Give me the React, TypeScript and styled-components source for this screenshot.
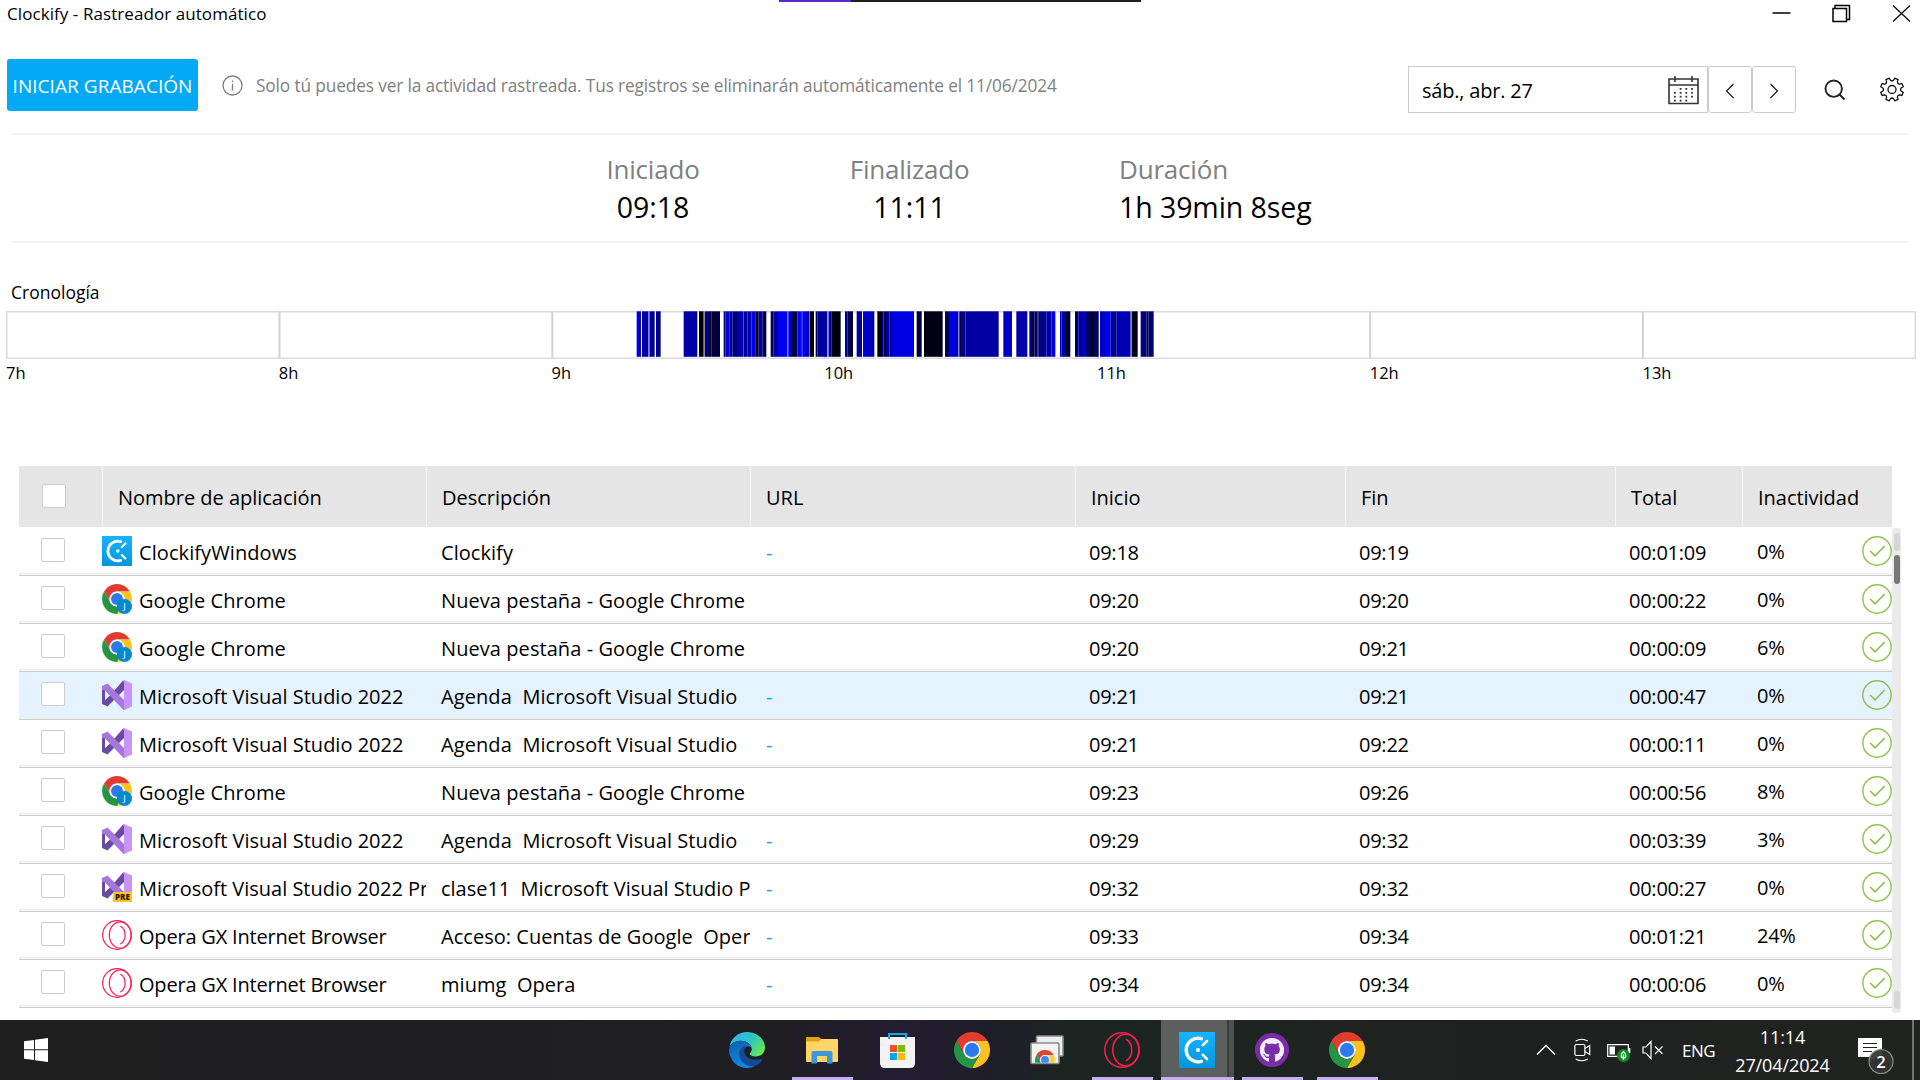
import React from "react";
import styled, { createGlobalStyle } from "styled-components";
import { FaGithub } from "react-icons/fa";

const GlobalStyle = createGlobalStyle`
  *, *::before, *::after { box-sizing: border-box; }
  html, body { margin: 0; padding: 0; background: #fff; overflow: hidden; }
  body { font-family: "Open Sans", "Noto Sans", sans-serif; color: #000; }
  svg { display: block; flex: none; }
`;

const Screen = styled.div`
  width: 1920px;
  height: 1080px;
  display: flex;
  flex-direction: column;
  overflow: hidden;
  position: relative;
`;

/* ---------- window frame ---------- */

const RecorderStrip = styled.div`
  position: absolute;
  top: 0;
  left: 779px;
  width: 362px;
  height: 2px;
  background: linear-gradient(to right, #5a2ac8 72px, #1f1f1f 72px);
`;

const AppWindow = styled.main`
  height: 1020px;
  display: flex;
  flex-direction: column;
`;

const TitleBar = styled.header`
  height: 28px;
  display: flex;
  justify-content: space-between;
  padding: 0 9px 0 7px;
`;

const Title = styled.span`
  font-size: 17px;
  line-height: 28px;
  letter-spacing: 0.07px;
`;

const WindowButtons = styled.div`
  display: flex;
  gap: 41px;
  padding-top: 4px;
`;

/* ---------- toolbar ---------- */

const Toolbar = styled.section`
  height: 105px;
  display: flex;
  align-items: flex-start;
  padding: 31px 15px 0 7px;
`;

const RecordButton = styled.button`
  width: 191px;
  height: 52px;
  padding: 0;
  border: 0;
  border-radius: 3px;
  background: #03a9f4;
  color: #fff;
  font: 19px/54px "Open Sans", sans-serif;
  letter-spacing: 0.05px;
  white-space: nowrap;
`;

const Notice = styled.div`
  display: flex;
  align-items: center;
  gap: 13px;
  height: 52px;
  margin-left: 24px;
  color: #808080;
  font-size: 17.3px;
  letter-spacing: -0.14px;
  white-space: nowrap;
`;

const DateControls = styled.div`
  display: flex;
  align-items: center;
  margin: 7px 0 0 auto;
  height: 47px;
`;

const DateField = styled.div`
  width: 300px;
  height: 47px;
  border: 1px solid #ccc;
  display: flex;
  align-items: center;
  justify-content: space-between;
  padding: 2px 8px 0 13px;
  font-size: 20px;
  letter-spacing: -0.2px;
`;

const StepButton = styled.button`
  width: 44px;
  height: 47px;
  padding: 3px 0 0;
  border: 1px solid #ccc;
  border-radius: 3px;
  background: #fff;
  display: flex;
  align-items: center;
  justify-content: center;
`;

const ToolIcon = styled.span<{ $gap: number }>`
  margin-left: ${(p) => p.$gap}px;
`;

const Divider = styled.hr`
  flex: none;
  height: 2px;
  border: 0;
  margin: 0 10px;
  background: #f3f3f3;
`;

/* ---------- summary ---------- */

const Summary = styled.section`
  height: 106px;
  display: flex;
  padding: 15px 0 0 603px;
`;

const Stat = styled.div<{ $width: number; $after: number; $left?: boolean }>`
  width: ${(p) => p.$width}px;
  margin-right: ${(p) => p.$after}px;
  text-align: ${(p) => (p.$left ? "left" : "center")};
  white-space: nowrap;
`;

const StatLabel = styled.div`
  font-size: 26px;
  line-height: 38px;
  letter-spacing: -0.2px;
  color: #808080;
`;

const StatValue = styled.div`
  font-size: 28.5px;
  line-height: 38px;
  letter-spacing: -0.08px;
`;

/* ---------- timeline ---------- */

const Timeline = styled.section`
  height: 223px;
  padding: 34px 4px 0 6px;
`;

const TimelineTitle = styled.div`
  padding-left: 5px;
  font-size: 17.5px;
  line-height: 30px;
  height: 34px;
  letter-spacing: 0;
`;

const HourLabels = styled.div`
  display: grid;
  grid-template-columns: repeat(7, 272.75px);
  font-size: 16.5px;
  line-height: 28px;
`;

/* ---------- table ---------- */

const columns = "83px 324px 324px 325px 270px 270px 127px 1fr";

const Table = styled.section`
  padding-left: 19px;
`;

const HeaderRow = styled.div`
  width: 1873px;
  height: 61px;
  display: grid;
  grid-template-columns: ${columns};
  background: #e5e5e5;
  margin-bottom: 1px;
`;

const HeaderCell = styled.div`
  border-left: 1px solid #f4f4f4;
  padding: 1px 0 0 15px;
  font-size: 20px;
  line-height: 61px;
  letter-spacing: -0.02px;
  &:first-child { border-left: 0; padding: 18px 0 0 23px; }
`;

const TableBody = styled.div`
  display: flex;
`;

const Rows = styled.div`
  width: 1873px;
`;

const Row = styled.div<{ $selected?: boolean }>`
  height: 48px;
  display: grid;
  grid-template-columns: ${columns};
  background: ${(p) => (p.$selected ? "#e5f2ff" : "#fff")};
  border-bottom: 1px solid #ccc;
  box-shadow: inset 0 -2px 0 #f1f1f1;
`;

const Cell = styled.div`
  display: flex;
  min-width: 0;
  height: 47px;
  overflow: hidden;
  white-space: pre;
  padding-left: 14px;
  font-size: 20px;
  line-height: 50px;
  letter-spacing: -0.25px;
`;

const CheckCell = styled(Cell)`
  padding: 10px 0 0 22px;
`;

const AppCell = styled(Cell)<{ $spacing: number }>`
  padding-left: 0;
  gap: 7px;
  letter-spacing: ${(p) => p.$spacing}px;
`;

const DescriptionCell = styled(Cell)<{ $spacing: number }>`
  padding-left: 15px;
  letter-spacing: ${(p) => p.$spacing}px;
`;

const LinkCell = styled(Cell)`
  padding-left: 16px;
  color: #03a9f4;
`;

const IconSlot = styled.span`
  padding-top: 8px;
`;

const IdleCell = styled(Cell)`
  justify-content: space-between;
  padding-left: 15px;
  line-height: 48px;
`;

const Checkbox = styled.span`
  width: 24px;
  height: 24px;
  background: #fff;
  border: 1px solid #ccc;
  border-radius: 2px;
  display: block;
`;

const ScrollTrack = styled.div`
  width: 9px;
  height: 485px;
  border-radius: 3px;
  background: #ecebec;
  display: flex;
  flex-direction: column;
  align-items: center;
  padding: 5px 0 4px 1px;
`;

const ScrollPart = styled.span<{ $h: number; $color: string; $top?: string }>`
  width: 6px;
  height: ${(p) => p.$h}px;
  margin-top: ${(p) => p.$top ?? "0"};
  border-radius: 3px;
  background: ${(p) => p.$color};
`;

/* ---------- taskbar ---------- */

const Taskbar = styled.footer`
  height: 60px;
  display: flex;
  background: linear-gradient(to right, #1f1f1f 0, #1f1f22 330px, #1f1f24 640px, #1f1e22 780px, #231d31 900px, #1f1e28 990px, #1c2522 1070px, #1e2421 1300px, #1e2120 1500px, #20231f 1920px);
  color: #fff;
`;

const StartButton = styled.div`
  width: 717px;
  padding: 18px 0 0 24px;
`;

const TaskButton = styled.div<{ $running?: boolean; $active?: boolean }>`
  width: ${(p) => (p.$active ? 73 : 61)}px;
  margin: 0 ${(p) => (p.$active ? 8 : 14)}px 0 ${(p) => (p.$active ? -6 : 0)}px;
  height: 60px;
  display: flex;
  align-items: center;
  justify-content: ${(p) => (p.$active ? "flex-start" : "center")};
  padding: 3px 1px 0 ${(p) => (p.$active ? 18 : 0)}px;
  background: ${(p) =>
    p.$active
      ? "linear-gradient(to right, #5b605e 66px, #383c3b 66px, #383c3b 68px, #4c514f 68px)"
      : "transparent"};
  border-bottom: 3px solid ${(p) => (p.$running ? "#c6adf7" : "transparent")};
`;

const Tray = styled.div`
  margin-left: auto;
  width: 385px;
  display: flex;
`;

const TraySlot = styled.span<{ $w: number; $top: number }>`
  width: ${(p) => p.$w}px;
  padding-top: ${(p) => p.$top}px;
`;

const Language = styled.span`
  width: 48px;
  padding: 1px 0 0 1px;
  font-size: 17px;
  line-height: 60px;
  letter-spacing: -0.5px;
`;

const Clock = styled.div`
  width: 106px;
  padding: 3px 0 0 1px;
  text-align: center;
  font-size: 18px;
  line-height: 28px;
  letter-spacing: -0.1px;
`;

const ShowDesktop = styled.span`
  width: 8px;
  margin-left: auto;
  border-left: 2px solid #737573;
`;

/* ---------- icons ---------- */

const Chrome = ({ size, badge }: { size: number; badge?: boolean }) => (
  <svg width={size} height={size} viewBox="0 0 48 48">
    <path fill="#e33b2e" d="M24 12H44.78A24 24 0 0 0 3.22 12L13.61 30A12 12 0 0 1 24 12Z" />
    <path fill="#fcc21b" d="M34.39 30 24 48A24 24 0 0 0 44.78 12H24A12 12 0 0 1 34.39 30Z" />
    <path fill="#259544" d="M13.61 30 3.22 12A24 24 0 0 0 24 48L34.39 30A12 12 0 0 1 13.61 30Z" />
    <circle cx="24" cy="24" r="12" fill="#fff" />
    <circle cx="24" cy="24" r="9.6" fill="#2b7bee" />
    {badge && (
      <>
        <circle cx="36" cy="36" r="12" fill="#0288d1" />
        <text x="36" y="41.5" fontSize="15" fill="#fff" textAnchor="middle">J</text>
      </>
    )}
  </svg>
);

const VisualStudio = ({ pre }: { pre?: boolean }) => (
  <svg width="30" height="30" viewBox="0 0 30 30">
    <path fill="#6b4aa3" d="M21.5 0 23 9 5.5 26.6 0 24V6l3 4.5V20l5.5-5Z" />
    <path fill="#a678dc" d="M0 6 5.5 3.4 23 21v9h-1.5L3 10.5 0 10Z" />
    <path fill="#c893fa" d="M22 0 30 3.6V26.4L22 30Z" />
    {pre && (
      <>
        <rect x="11" y="20" width="19" height="10" fill="#ffc423" />
        <text x="20.5" y="28" fontSize="8" fontWeight="800" textAnchor="middle" fill="#2b2000">PRE</text>
      </>
    )}
  </svg>
);

const OperaGX = ({ size, color }: { size: number; color: string }) => (
  <svg width={size} height={size} viewBox="0 0 36 36" fill="none" stroke={color} strokeWidth="1.5">
    <circle cx="18" cy="18" r="17.2" />
    <ellipse cx="21.8" cy="18" rx="13" ry="15.8" />
    <path d="M22.5 7.5C29.5 12 29.5 24 22.5 28.5" strokeLinecap="round" />
  </svg>
);

const Clockify = ({ size }: { size: number }) => (
  <svg width={size} height={size} viewBox="0 0 36 36">
    <defs>
      <linearGradient id="clk" x1="0" y1="0" x2="0" y2="1">
        <stop offset="0" stopColor="#18b4ff" />
        <stop offset="1" stopColor="#0296db" />
      </linearGradient>
    </defs>
    <rect width="36" height="36" fill="url(#clk)" />
    <g fill="none" stroke="#fff" strokeWidth="3.4" strokeLinecap="round">
      <path d="M22.4 6.7A11.8 11.8 0 1 0 22.4 29.3" />
      <path d="M23.8 13.2 28 9M23.8 22.8 28 27" strokeWidth="2.6" />
    </g>
    <circle cx="19" cy="18" r="2.1" fill="#fff" />
  </svg>
);

const CheckCircle = () => (
  <svg width="30" height="30" viewBox="0 0 30 30" fill="none" stroke="#8bc34a">
    <circle cx="15" cy="15" r="14.2" strokeWidth="1.4" />
    <path d="M8.2 15 13 19.8 22.8 10" strokeWidth="1.6" />
  </svg>
);

const Edge = () => (
  <svg width="36" height="36" viewBox="0 0 36 36">
    <defs>
      <linearGradient id="edgeTop" x1="0" y1="0.2" x2="1" y2="0.7">
        <stop offset="0" stopColor="#36b4f2" />
        <stop offset="0.5" stopColor="#2cc5c4" />
        <stop offset="1" stopColor="#6ae650" />
      </linearGradient>
      <linearGradient id="edgeLeft" x1="0" y1="0" x2="0.4" y2="1">
        <stop offset="0" stopColor="#0c5fae" />
        <stop offset="1" stopColor="#1587e2" />
      </linearGradient>
    </defs>
    <path fill="url(#edgeTop)" d="M.5 15.5C1.5 6.5 9 0 18 0 28 0 36 7 36 15.5c0 5.5-4 9-9 9-4 0-6.3-1.4-6.3-2.7 0-1 2.1-1.7 2.1-4.5C22.8 13 18 8.5 11 8.8 6 9 2 11.5 .5 15.5Z" />
    <path fill="url(#edgeLeft)" d="M0 18C.6 12.3 5.5 8.8 11 8.8c6 0 10.5 3 11.7 6.7C20.5 13.5 14 14.5 13.2 21 13.2 28 19 33.5 26 33.8 24 35.2 21 36 18 36 8 36 0 28 0 18Z" />
    <path fill="#124a96" d="M10.2 21.5C10.2 18 12.5 14 18.5 13.7c-1.7 1.1-3.2 3-3.2 5.3 0 6.5 8 10.5 17 7.7.8-.2 1.3.2.9 1C31.5 30.8 28 33.5 24.8 34.3 17 35.3 10.2 29 10.2 21.5Z" />
  </svg>
);

const Folder = () => (
  <svg width="32" height="27" viewBox="0 0 32 27">
    <path fill="#e3a008" d="M0 1Q0 0 1 0H13L15 2V5H0Z" />
    <path fill="#ffd567" d="M0 4.5H13L15 2H31Q32 2 32 3V24Q32 25 31 25H1Q0 25 0 24Z" />
    <path fill="#3b98dc" d="M5.5 16Q5.5 14 7.5 14H24.5Q26.5 14 26.5 16V26.5H21V19H11V26.5H5.5Z" />
  </svg>
);

const Store = () => (
  <svg width="35" height="36" viewBox="0 0 35 36">
    <path fill="#f3f3f3" d="M0 5H35V31Q35 36 30 36H5Q0 36 0 31Z" />
    <path d="M9 7V2H26V7" fill="none" stroke="#17a4ee" strokeWidth="2" />
    <path fill="#f25022" d="M10 13h7v7h-7z" />
    <path fill="#7fba00" d="M18 13h7v7h-7z" />
    <path fill="#00a4ef" d="M10 21h7v7h-7z" />
    <path fill="#ffb900" d="M18 21h7v7h-7z" />
  </svg>
);

const RemoteDesktop = () => (
  <svg width="34" height="30" viewBox="0 0 34 30">
    <rect x="6.5" y="1" width="26.5" height="20" rx="1" fill="#eee" stroke="#8a8a8a" strokeWidth="1.6" />
    <rect x="1" y="8" width="28" height="20.5" rx="1" fill="#f1f1f1" stroke="#8a8a8a" strokeWidth="1.6" />
    <svg x="5" y="15" width="20" height="12.7" viewBox="0 0 48 30.5">
      <path fill="#db4437" d="M24 12H44.78A24 24 0 0 0 3.22 12L13.6 30A12 12 0 0 1 24 12Z" />
      <path fill="#ffcd40" d="M34.4 30 24 48A24 24 0 0 0 44.78 12H24A12 12 0 0 1 34.4 30Z" />
      <path fill="#0f9d58" d="M13.6 30 3.22 12A24 24 0 0 0 24 48L34.4 30Z" />
      <circle cx="24" cy="24" r="12" fill="#f1f1f1" />
      <circle cx="24" cy="24" r="9.6" fill="#4285f4" />
    </svg>
  </svg>
);

const GitHubDesktop = () => (
  <svg width="34" height="34" viewBox="0 0 34 34">
    <circle cx="17" cy="17" r="17" fill="#7a2da8" />
    <FaGithub x="4.5" y="4.5" width="25" height="25" size={25} color="#f3eef8" />
  </svg>
);

const gearPath = (() => {
  const pt = (r: number, deg: number) => {
    const a = ((deg - 90) * Math.PI) / 180;
    return `${(12 + r * Math.cos(a)).toFixed(2)} ${(12.5 + r * Math.sin(a)).toFixed(2)}`;
  };
  let d = "";
  for (let i = 0; i < 8; i++) {
    const c = 22.5 + i * 45;
    d += `${i ? "L" : "M"}${pt(11.6, c - 9)}L${pt(11.6, c + 9)}L${pt(9.6, c + 12)}Q${pt(7.6, c + 22.5)} ${pt(9.6, c + 33)}`;
  }
  return d + "Z";
})();

const Gear = () => (
  <svg width="25" height="25" viewBox="0 0 25 25" fill="none" stroke="#111" strokeWidth="1.3" strokeLinejoin="round">
    <path d={gearPath} />
    <circle cx="12" cy="12.5" r="4" />
  </svg>
);

const calendarDots: [number, number][] = [];
for (let r = 0; r < 4; r++)
  for (let c = 0; c < 4; c++)
    if (!(r === 0 && c === 0) && !(r === 3 && c === 3)) calendarDots.push([6 + c * 5.7, 12 + r * 3.9]);

const Calendar = () => (
  <svg width="31" height="29" viewBox="0 0 31 29">
    <path d="M1 3H30V27.5H1ZM1 9H30" fill="none" stroke="#333" strokeWidth="1.6" />
    <path d="M7 0V6M24 0V6" stroke="#333" strokeWidth="1.6" />
    {calendarDots.map(([x, y]) => (
      <rect key={`${x}-${y}`} x={x} y={y} width="1.8" height="1.8" fill="#333" />
    ))}
  </svg>
);

/* ---------- data ---------- */

type App = "clockify" | "chrome" | "vs" | "vspre" | "opera";

const apps: Record<App, { name: string; spacing: number; descSpacing: number; icon: React.ReactNode }> = {
  clockify: { name: "ClockifyWindows", spacing: 0.08, descSpacing: 0.05, icon: <Clockify size={30} /> },
  chrome: { name: "Google Chrome", spacing: 0.08, descSpacing: 0.07, icon: <Chrome size={30} badge /> },
  vs: { name: "Microsoft Visual Studio 2022", spacing: 0.01, descSpacing: 0.08, icon: <VisualStudio /> },
  vspre: { name: "Microsoft Visual Studio 2022 Pr", spacing: -0.01, descSpacing: -0.02, icon: <VisualStudio pre /> },
  opera: { name: "Opera GX Internet Browser", spacing: -0.2, descSpacing: 0.04, icon: <OperaGX size={30} color="#fa2355" /> },
};

const entries: [App, string, string, string, string, string, string][] = [
  ["clockify", "Clockify", "-", "09:18", "09:19", "00:01:09", "0%"],
  ["chrome", "Nueva pestaña - Google Chrome", "", "09:20", "09:20", "00:00:22", "0%"],
  ["chrome", "Nueva pestaña - Google Chrome", "", "09:20", "09:21", "00:00:09", "6%"],
  ["vs", "Agenda  Microsoft Visual Studio", "-", "09:21", "09:21", "00:00:47", "0%"],
  ["vs", "Agenda  Microsoft Visual Studio", "-", "09:21", "09:22", "00:00:11", "0%"],
  ["chrome", "Nueva pestaña - Google Chrome", "", "09:23", "09:26", "00:00:56", "8%"],
  ["vs", "Agenda  Microsoft Visual Studio", "-", "09:29", "09:32", "00:03:39", "3%"],
  ["vspre", "clase11  Microsoft Visual Studio P", "-", "09:32", "09:32", "00:00:27", "0%"],
  ["opera", "Acceso: Cuentas de Google  Oper", "-", "09:33", "09:34", "00:01:21", "24%"],
  ["opera", "miumg  Opera", "-", "09:34", "09:34", "00:00:06", "0%"],
];

/* start, end (in thirds of a pixel from the anchor) and colour of each activity span */
type Span = [number, number, string];

const morning: Span[] = [
  [50, 63, "#0000dd"], [66, 85, "#0000a0"], [85, 89, "#7070c8"], [89, 104, "#0000a0"], [108, 122, "#000085"],
  [191, 232, "#0000a8"], [237, 251, "#000"], [251, 255, "#8a8a9a"], [255, 267, "#000080"], [267, 275, "#000010"], [275, 300, "#000040"],
  [311, 316, "#000060"], [316, 328, "#0000d8"], [328, 338, "#0000a0"], [338, 351, "#000070"], [351, 369, "#0000b0"],
  [369, 372, "#5050c0"], [372, 382, "#0000a0"], [382, 395, "#0000b4"], [395, 406, "#0000e0"], [406, 416, "#000018"], [416, 428, "#0000a4"], [428, 439, "#000050"],
  [452, 460, "#000060"], [460, 474, "#0000a0"], [474, 502, "#0000f8"], [502, 505, "#6060ff"], [505, 513, "#0000d0"], [513, 532, "#000040"],
  [532, 544, "#0000ff"], [544, 547, "#000080"], [547, 558, "#0000f8"], [558, 568, "#0000c0"], [569, 582, "#000"],
  [587, 593, "#000050"], [593, 622, "#0000a0"], [622, 626, "#9090d8"], [626, 634, "#0000a0"], [634, 662, "#000014"],
  [675, 683, "#0000a0"], [683, 699, "#000048"], [710, 726, "#0000a0"], [729, 735, "#0000e0"], [735, 763, "#0000c0"],
  [772, 786, "#000004"], [786, 790, "#0000a0"], [790, 798, "#000030"], [798, 808, "#0000a0"], [808, 816, "#000080"],
  [816, 882, "#0000e4"],
];

const late: Span[] = [
  [80, 95, "#000038"], [102, 158, "#000014"], [165, 177, "#000060"], [177, 205, "#0000d8"], [205, 208, "#7070d8"],
  [208, 213, "#000038"], [213, 226, "#000088"], [226, 326, "#0000a2"], [340, 366, "#0000c4"], [379, 412, "#0000a8"],
  [418, 423, "#000080"], [423, 434, "#000040"], [434, 443, "#000070"], [443, 446, "#0000b0"], [446, 450, "#000010"],
  [450, 470, "#000088"], [470, 484, "#0000b0"], [484, 496, "#0000f0"], [510, 515, "#0000f0"], [515, 528, "#0000a0"], [528, 541, "#000030"],
  [555, 565, "#000060"], [565, 576, "#0000a0"], [576, 588, "#0000c0"], [588, 600, "#000070"], [600, 612, "#000020"], [612, 626, "#000068"],
  [630, 645, "#0000c0"], [645, 662, "#0000f4"], [662, 680, "#000090"], [680, 722, "#0000b2"], [722, 726, "#8080d0"], [726, 743, "#000014"],
  [752, 756, "#0000b0"], [756, 770, "#000080"], [770, 776, "#000040"], [776, 791, "#000074"],
];

const bars: Span[] = [
  ...morning.map(([a, b, c]): Span => [614 + a / 3, 614 + b / 3, c]),
  ...late.map(([a, b, c]): Span => [884 + a / 3, 884 + b / 3, c]),
];

const TimelineChart = () => (
  <svg width="1910" height="48" viewBox="0 0 1910 48">
    <rect x="0.75" y="0.75" width="1908.5" height="46.5" fill="none" stroke="#dadada" strokeWidth="1.5" />
    {[273.5, 546.3, 819, 1091.8, 1364.1, 1636.9].map((x) => (
      <rect key={x} x={x - 1} y="0" width="2" height="47" fill="#d2d2d2" />
    ))}
    {bars.map(([a, b, c]) => (
      <rect key={a} x={a} y="0.3" width={b - a} height="45.5" fill={c} />
    ))}
  </svg>
);

const App = () => (
  <>
    <GlobalStyle />
    <Screen>
      <AppWindow>
        <TitleBar>
          <Title>Clockify - Rastreador automático</Title>
          <WindowButtons>
            <svg width="19" height="19" viewBox="0 0 19 19"><path d="M0.5 9H18.5" stroke="#000" strokeWidth="1.5" /></svg>
            <svg width="19" height="19" viewBox="0 0 19 19" fill="none" stroke="#000" strokeWidth="1.5">
              <path d="M1 4.5H14.5V17.5H1ZM3 4V1.5H17.5V15.5H15" />
            </svg>
            <svg width="19" height="19" viewBox="0 0 19 19"><path d="M1 1.5 18 17.5M18 1.5 1 17.5" stroke="#000" strokeWidth="1.2" /></svg>
          </WindowButtons>
        </TitleBar>

        <Toolbar>
          <RecordButton>INICIAR GRABACIÓN</RecordButton>
          <Notice>
            <svg width="21" height="21" viewBox="0 0 21 21" fill="none" stroke="#808080">
              <circle cx="10.5" cy="10.5" r="9.5" strokeWidth="1.3" />
              <path d="M10.5 8.8V15.5M10.5 5.5V7.2" strokeWidth="1.3" />
            </svg>
            <span>Solo tú puedes ver la actividad rastreada. Tus registros se eliminarán automáticamente el 11/06/2024</span>
          </Notice>
          <DateControls>
            <DateField>
              sáb., abr. 27
              <Calendar />
            </DateField>
            <StepButton>
              <svg width="10" height="16" viewBox="0 0 10 16" fill="none" stroke="#111" strokeWidth="1.1"><path d="M8.5 1 1.5 8 8.5 15" /></svg>
            </StepButton>
            <StepButton>
              <svg width="10" height="16" viewBox="0 0 10 16" fill="none" stroke="#111" strokeWidth="1.1"><path d="M1.5 1 8.5 8 1.5 15" /></svg>
            </StepButton>
            <ToolIcon $gap={28}>
              <svg width="22" height="22" viewBox="0 0 22 22" fill="none" stroke="#222" strokeWidth="1.9">
                <circle cx="9.7" cy="9.7" r="8.2" />
                <path d="M15.5 15.5 20.5 20.5" />
              </svg>
            </ToolIcon>
            <ToolIcon $gap={34}>
              <Gear />
            </ToolIcon>
          </DateControls>
        </Toolbar>

        <Divider />
        <Summary>
          <Stat $width={100} $after={141}>
            <StatLabel>Iniciado</StatLabel>
            <StatValue>09:18</StatValue>
          </Stat>
          <Stat $width={131} $after={144}>
            <StatLabel>Finalizado</StatLabel>
            <StatValue>11:11</StatValue>
          </Stat>
          <Stat $width={200} $after={0} $left>
            <StatLabel>Duración</StatLabel>
            <StatValue>1h 39min 8seg</StatValue>
          </Stat>
        </Summary>
        <Divider />

        <Timeline>
          <TimelineTitle>Cronología</TimelineTitle>
          <TimelineChart />
          <HourLabels>
            {["7h", "8h", "9h", "10h", "11h", "12h", "13h"].map((h) => (
              <span key={h}>{h}</span>
            ))}
          </HourLabels>
        </Timeline>

        <Table>
          <HeaderRow>
            <HeaderCell><Checkbox /></HeaderCell>
            {["Nombre de aplicación", "Descripción", "URL", "Inicio", "Fin", "Total", "Inactividad"].map((h) => (
              <HeaderCell key={h}>{h}</HeaderCell>
            ))}
          </HeaderRow>
          <TableBody>
            <Rows>
              {entries.map(([app, desc, url, start, end, total, idle], i) => (
                <Row key={i} $selected={i === 3}>
                  <CheckCell><Checkbox /></CheckCell>
                  <AppCell $spacing={apps[app].spacing}>
                    <IconSlot>{apps[app].icon}</IconSlot>
                    {apps[app].name}
                  </AppCell>
                  <DescriptionCell $spacing={apps[app].descSpacing}>{desc}</DescriptionCell>
                  <LinkCell>{url}</LinkCell>
                  <Cell>{start}</Cell>
                  <Cell>{end}</Cell>
                  <Cell>{total}</Cell>
                  <IdleCell>
                    {idle}
                    <IconSlot><CheckCircle /></IconSlot>
                  </IdleCell>
                </Row>
              ))}
            </Rows>
            <ScrollTrack>
              <ScrollPart $h={18} $color="#d6d6d6" />
              <ScrollPart $h={29} $color="#777" $top="4px" />
              <ScrollPart $h={18} $color="#d6d6d6" $top="auto" />
            </ScrollTrack>
          </TableBody>
        </Table>
      </AppWindow>

      <Taskbar>
        <StartButton>
          <svg width="24" height="24" viewBox="0 0 24 24" fill="#fff">
            <path d="M0 3.3 10 1.9V11.3H0ZM11 1.7 24 0V11.3H11ZM0 12.3H10V22.1L0 20.7ZM11 12.3H24V24L11 22.3Z" />
          </svg>
        </StartButton>
        <TaskButton><Edge /></TaskButton>
        <TaskButton $running><Folder /></TaskButton>
        <TaskButton><Store /></TaskButton>
        <TaskButton><Chrome size={36} /></TaskButton>
        <TaskButton><RemoteDesktop /></TaskButton>
        <TaskButton $running><OperaGX size={36} color="#fa1e4e" /></TaskButton>
        <TaskButton $running $active><Clockify size={36} /></TaskButton>
        <TaskButton $running><GitHubDesktop /></TaskButton>
        <TaskButton $running><Chrome size={36} /></TaskButton>
        <Tray>
          <TraySlot $w={38} $top={24}>
            <svg width="22" height="12" viewBox="0 0 22 12" fill="none" stroke="#fff" strokeWidth="1.3"><path d="M2 10.5 11 1.5 20 10.5" /></svg>
          </TraySlot>
          <TraySlot $w={34} $top={18}>
            <svg width="20" height="24" viewBox="0 0 20 24" fill="none" stroke="#fff" strokeWidth="1.2">
              <rect x="1.9" y="6.5" width="10" height="11" rx="1.5" />
              <path d="M11.9 10.5 16.7 7.5V16.5L11.9 13.5M2.7 3Q8.7-.5 14.7 3M2.7 21Q8.7 24.5 14.7 21" />
            </svg>
          </TraySlot>
          <TraySlot $w={35} $top={23}>
            <svg width="26" height="20" viewBox="0 0 26 20">
              <path d="M.7 1.7H21.3V13.3H.7Z" fill="none" stroke="#fff" strokeWidth="1.2" />
              <path d="M2.5 3.5H8V11.5H2.5ZM22 5h1.3v5H22Z" fill="#fff" />
              <circle cx="16.5" cy="12.5" r="6.5" fill="#0f8a1d" />
              <path d="M16.5 8.5C13.5 11 13.5 15 16.5 15 19.5 15 19.5 11 16.5 8.5ZM16.5 11.5V17" fill="none" stroke="#fff" strokeWidth="1.2" />
            </svg>
          </TraySlot>
          <TraySlot $w={39} $top={20}>
            <svg width="22" height="20" viewBox="0 0 22 20" fill="none" stroke="#fff" strokeWidth="1.2">
              <path d="M1 7H4L9 1.5V18.5L4 13H1ZM13 6.5 20.5 14M20.5 6.5 13 14" />
            </svg>
          </TraySlot>
          <Language>ENG</Language>
          <Clock>
            <div>11:14</div>
            <div>27/04/2024</div>
          </Clock>
          <TraySlot $w={64} $top={18}>
            <svg width="64" height="38" viewBox="0 0 64 38">
              <path d="M23 0H47V19H41L34 25V19H23Z" fill="#fff" />
              <path d="M28 5.5H42M28 9.5H42M28 13.5H37" stroke="#222" strokeWidth="1.2" />
              <circle cx="46" cy="23.5" r="12" fill="#333533" fillOpacity="0.93" stroke="#8c8e8c" strokeWidth="1.2" />
              <text x="46" y="29.5" fontSize="16.5" fontWeight="600" textAnchor="middle" fill="#fff">2</text>
            </svg>
          </TraySlot>
          <ShowDesktop />
        </Tray>
      </Taskbar>
      <RecorderStrip />
    </Screen>
  </>
);

export default App;
